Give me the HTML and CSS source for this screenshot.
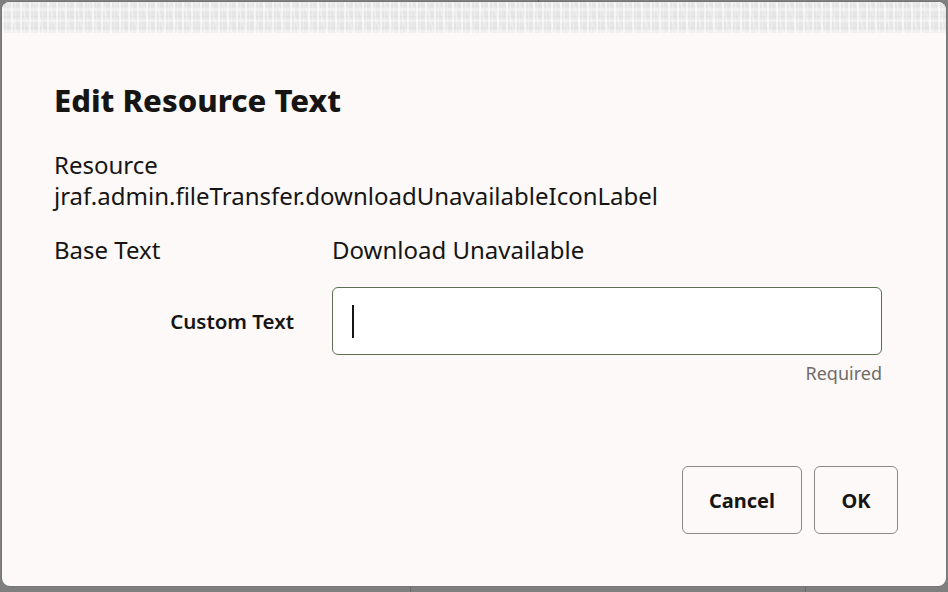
FILE: index.html
```html
<!DOCTYPE html>
<html lang="en">
<head>
<meta charset="utf-8">
<title>Edit Resource Text</title>
<link rel="stylesheet" href="styles.css">
</head>
<body>
<div class="backdrop">
  <div class="table-row top-row">
    <div class="cell cell-a"></div>
    <div class="cell cell-b"></div>
    <div class="cell cell-c">Resource</div>
  </div>
  <div class="table-row bottom-row">
    <div class="cell cell-d"></div>
    <div class="cell cell-e">Description</div>
    <div class="cell cell-f">Description</div>
  </div>
</div>

<div class="dialog" role="dialog" aria-labelledby="dlg-title">
  <div class="dialog-strip"></div>
  <div class="dialog-body">
    <h1 class="title" id="dlg-title">Edit Resource Text</h1>
    <div class="resource">
      <div>Resource</div>
      <div>jraf.admin.fileTransfer.downloadUnavailableIconLabel</div>
    </div>
    <div class="form">
      <div class="label">Base Text</div>
      <div class="value">Download Unavailable</div>
      <label class="label-strong">Custom Text</label>
      <div class="input"><span class="caret"></span></div>
      <div class="hint">Required</div>
    </div>
  </div>
  <div class="footer">
    <button class="btn btn-cancel">Cancel</button>
    <button class="btn btn-ok">OK</button>
  </div>
</div>
</body>
</html>
```

FILE: styles.css
```css
html, body {
  margin: 0;
  padding: 0;
}
body {
  width: 948px;
  height: 592px;
  overflow: hidden;
  background: #7f7f7f;
  font-family: "Noto Sans", "Open Sans", sans-serif;
  color: #161513;
  position: relative;
}

/* underlying page seen through the scrim */
.backdrop {
  height: 592px;
  display: flex;
  flex-direction: column;
  justify-content: space-between;
}
.table-row {
  display: flex;
  height: 24px;
  font-size: 20px;
  color: #1d1d1d;
}
.top-row {
  margin-top: -20px;
  align-items: flex-end;
}
.top-row .cell {
  line-height: 24px;
}
.cell-a { width: 193px; border-right: 1px solid #5c5c5c; }
.cell-b { width: 217px; }
.cell-c { width: 127px; border-right: 1px solid #5c5c5c; }
.bottom-row {
  margin-bottom: -19px;
  align-items: flex-start;
}
.bottom-row .cell { line-height: 30px; padding-left: 14px; }
.cell-d { width: 0; border-right: 1px solid #6a6a6a; }
.cell-e { width: 381px; border-right: 1px solid #6a6a6a; }
.cell-f { width: 380px; border-right: 1px solid #6a6a6a; }

/* modal dialog */
.dialog {
  position: absolute;
  left: 2px;
  top: 2px;
  width: 944px;
  height: 584px;
  border-radius: 8px;
  background: #fcf9f8;
  overflow: hidden;
  display: flex;
  flex-direction: column;
  box-shadow: 0 0 0 1px rgba(0,0,0,0.06);
}
.dialog-strip {
  height: 31px;
  flex: none;
  background-color: #e6e6e6;
  background-image:
    repeating-linear-gradient(90deg, rgba(255,255,255,0.55) 0 2px, transparent 2px 4px, rgba(255,255,255,0.3) 4px 5px, transparent 5px 9px),
    repeating-linear-gradient(0deg, rgba(255,255,255,0.35) 0 3px, transparent 3px 5px, rgba(0,0,0,0.025) 5px 6px, transparent 6px 11px),
    repeating-linear-gradient(75deg, rgba(255,255,255,0.25) 0 2px, transparent 2px 13px);
}
.dialog-body {
  padding: 47px 52px 0 52px;
}
.title {
  margin: 0;
  font-size: 31px;
  line-height: 40px;
  font-weight: 800;
}
.resource {
  margin-top: 29px;
  font-size: 24px;
  line-height: 31px;
}
.form {
  margin-top: 23px;
  display: grid;
  grid-template-columns: 278px 550px;
  align-items: center;
}
.label, .value {
  font-size: 24px;
  line-height: 31px;
}
.label-strong {
  grid-column: 1;
  margin-top: 22px;
  justify-self: end;
  padding-right: 38px;
  font-size: 20.5px;
  font-weight: 600;
  line-height: 28px;
}
.input {
  grid-column: 2;
  margin-top: 22px;
  box-sizing: border-box;
  height: 68px;
  border: 1px solid #5e7052;
  border-radius: 6px;
  background: #ffffff;
  display: flex;
  align-items: center;
  padding-left: 19px;
}
.caret {
  width: 1.5px;
  height: 33px;
  background: #161513;
}
.hint {
  grid-column: 2;
  justify-self: end;
  margin-top: 7px;
  font-size: 18px;
  line-height: 22px;
  color: #6f6c68;
}

.footer {
  margin-top: auto;
  display: flex;
  justify-content: flex-end;
  gap: 12px;
  padding: 0 48px 52px 0;
}
.btn {
  box-sizing: border-box;
  height: 68px;
  border: 1px solid #8c8a87;
  border-radius: 6px;
  background: #fcf9f8;
  font-family: inherit;
  font-size: 20px;
  font-weight: 700;
  color: #161513;
  padding: 0;
}
.btn-cancel { width: 120px; }
.btn-ok { width: 84px; }
```
